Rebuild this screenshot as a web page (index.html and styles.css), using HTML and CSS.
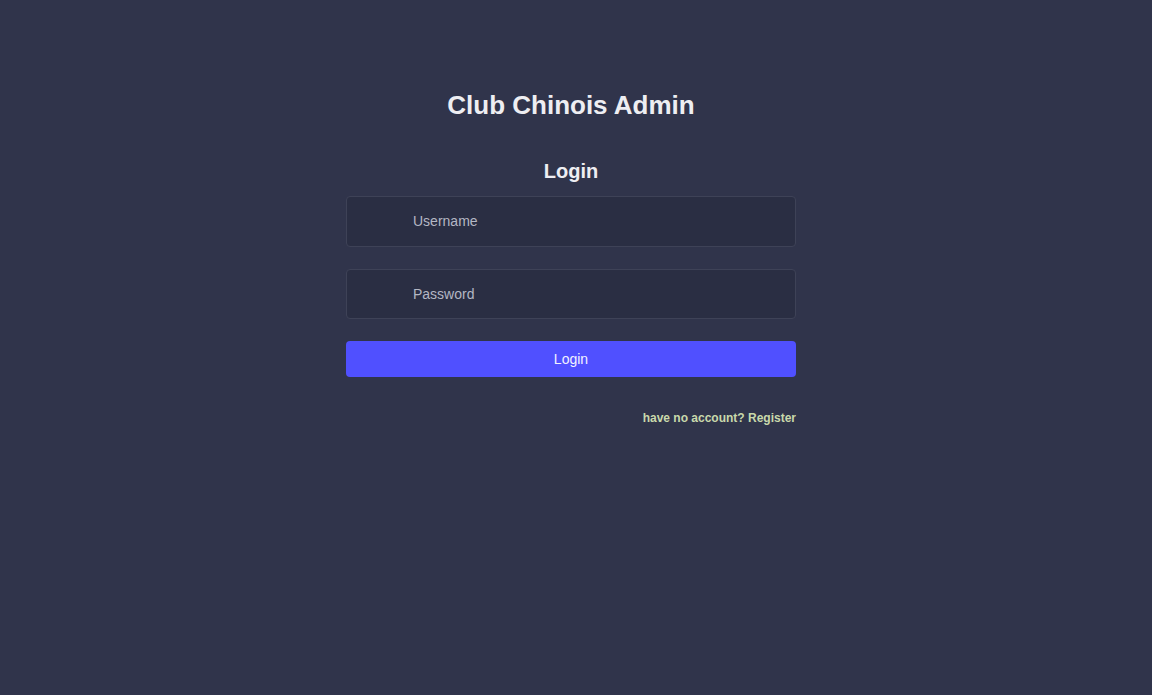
FILE: index.html
```html
<!DOCTYPE html>
<html>
<head>
<meta charset="utf-8">
<link rel="stylesheet" href="styles.css">
</head>
<body>
<div class="page">
  <h1 class="title">Club Chinois Admin</h1>
  <form class="form">
    <h2 class="heading">Login</h2>
    <div class="field"><input class="input" type="text" placeholder="Username"></div>
    <div class="field"><input class="input" type="password" placeholder="Password"></div>
    <button class="btn" type="button">Login</button>
    <div class="register"><a class="link" href="#">have no account? Register</a></div>
  </form>
</div>
</body>
</html>
```
FILE: styles.css
```css
html, body {
  margin: 0;
  padding: 0;
  height: 100%;
  background: #30344b;
  font-family: "Liberation Sans", Arial, sans-serif;
}
.page {
  display: flex;
  flex-direction: column;
  align-items: center;
  padding-top: 89px;
  padding-right: 10px;
}
.title {
  margin: 0;
  font-size: 26px;
  line-height: 32px;
  font-weight: bold;
  color: #eeeef2;
}
.form {
  width: 450px;
  display: flex;
  flex-direction: column;
  margin-top: 37px;
}
.heading {
  margin: 0 0 12px;
  text-align: center;
  font-size: 20px;
  line-height: 26px;
  font-weight: bold;
  color: #eeeef2;
}
.field {
  margin-bottom: 22px;
}
.input {
  display: block;
  box-sizing: border-box;
  width: 100%;
  height: 50.5px;
  background: #2a2e43;
  border: 1px solid #3e4257;
  border-radius: 4px;
  padding: 0 0 0 66px;
  font-family: "Liberation Sans", Arial, sans-serif;
  font-size: 14px;
  color: #c0c3cf;
  outline: none;
}
.input::placeholder {
  color: #b4b7c4;
}
.btn {
  height: 36px;
  border: none;
  border-radius: 4px;
  background: #5050ff;
  color: #f2f2ff;
  font-family: "Liberation Sans", Arial, sans-serif;
  font-size: 14px;
  cursor: pointer;
}
.register {
  text-align: right;
  margin-top: 31px;
}
.link {
  font-size: 12px;
  font-weight: bold;
  color: #c9d9ab;
  text-decoration: none;
}
```
